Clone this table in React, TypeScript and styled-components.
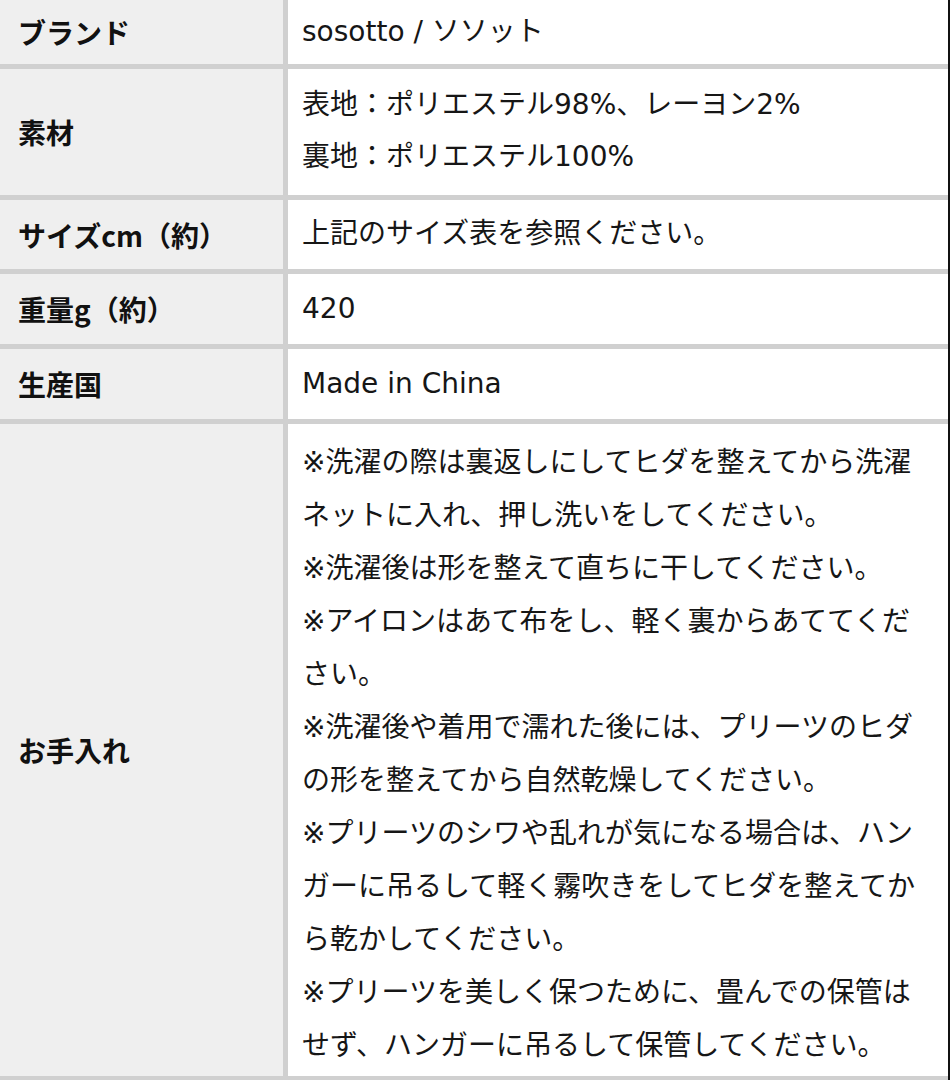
import React, { FC } from 'react';
import styled, { createGlobalStyle } from 'styled-components';

const GlobalStyle = createGlobalStyle`
  html, body {
    margin: 0;
    padding: 0;
    background: #ffffff;
  }
  body {
    font-family: 'DejaVu Sans', 'Noto Sans CJK JP', sans-serif;
    color: #141414;
  }
`;

interface SpecRow {
  label: string;
  lines: string[];
  padTop: number;
  padBottom: number;
  lineHeight: number;
}

const rows: SpecRow[] = [
  { label: 'ブランド', lines: ['sosotto / ソソット'], padTop: 6, padBottom: 6, lineHeight: 52 },
  {
    label: '素材',
    lines: ['表地：ポリエステル98%、レーヨン2%', '裏地：ポリエステル100%'],
    padTop: 10,
    padBottom: 12,
    lineHeight: 52,
  },
  { label: 'サイズcm（約）', lines: ['上記のサイズ表を参照ください。'], padTop: 8, padBottom: 9, lineHeight: 52 },
  { label: '重量g（約）', lines: ['420'], padTop: 9, padBottom: 9, lineHeight: 52 },
  { label: '生産国', lines: ['Made in China'], padTop: 9, padBottom: 9, lineHeight: 52 },
  {
    label: 'お手入れ',
    lines: [
      '※洗濯の際は裏返しにしてヒダを整えてから洗濯ネットに入れ、押し洗いをしてください。',
      '※洗濯後は形を整えて直ちに干してください。',
      '※アイロンはあて布をし、軽く裏からあててください。',
      '※洗濯後や着用で濡れた後には、プリーツのヒダの形を整えてから自然乾燥してください。',
      '※プリーツのシワや乱れが気になる場合は、ハンガーに吊るして軽く霧吹きをしてヒダを整えてから乾かしてください。',
      '※プリーツを美しく保つために、畳んでの保管はせず、ハンガーに吊るして保管してください。',
    ],
    padTop: 12,
    padBottom: 4,
    lineHeight: 53,
  },
];

const Frame = styled.div`
  width: 948px;
  border-right: 2px solid #111111;
`;

const Table = styled.div`
  display: grid;
  grid-template-columns: 283px 1fr;
  gap: 5px;
  padding-bottom: 5px;
  background: #d0d0d0;
`;

const Label = styled.div`
  display: flex;
  align-items: center;
  padding: 0 18px;
  background: #efefef;
  font-family: 'Noto Sans CJK JP', 'DejaVu Sans', sans-serif;
  font-size: 28px;
  font-weight: 700;
  line-height: 52px;
  color: #111111;
`;

const Value = styled.div<{ $padTop: number; $padBottom: number; $lineHeight: number }>`
  padding: ${({ $padTop }) => $padTop}px 14px ${({ $padBottom }) => $padBottom}px 14px;
  background: #ffffff;
  font-size: 28px;
  font-weight: 400;
  line-height: ${({ $lineHeight }) => $lineHeight}px;
  color: #161616;
`;

const Line = styled.p`
  margin: 0;
  padding: 0;
`;

const App: FC = () => (
  <>
    <GlobalStyle />
    <Frame>
      <Table>
        {rows.map((row) => (
          <React.Fragment key={row.label}>
            <Label>{row.label}</Label>
            <Value $padTop={row.padTop} $padBottom={row.padBottom} $lineHeight={row.lineHeight}>
              {row.lines.map((line) => (
                <Line key={line}>{line}</Line>
              ))}
            </Value>
          </React.Fragment>
        ))}
      </Table>
    </Frame>
  </>
);

export default App;
